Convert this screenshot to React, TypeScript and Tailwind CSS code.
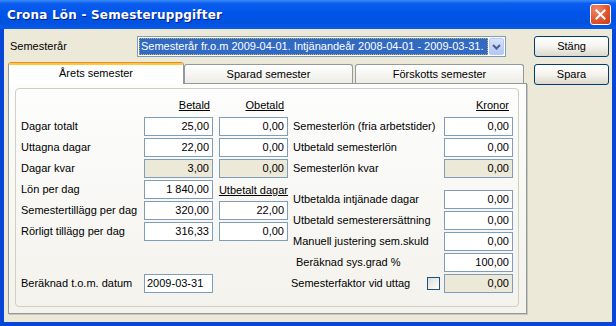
import React from 'react'

type FieldProps = {
  value: string
  ro?: boolean
  left?: boolean
}

const Field = ({ value, ro = false, left = false }: FieldProps) => (
  <div
    className={`h-[19px] w-[69px] shrink-0 border border-[#7F9DB9] flex items-center whitespace-nowrap ${
      left ? 'justify-start pl-[2px]' : 'justify-end pr-[3px]'
    } ${ro ? 'bg-[#ECE9D8]' : 'bg-white'}`}
  >
    {value}
  </div>
)

const XpButton = ({ label }: { label: string }) => (
  <div className="w-[75px] h-[21px] shrink-0 rounded-[3px] border border-[#003C74] bg-gradient-to-b from-white via-[#F4F3EE] to-[#DCD8CC] flex items-center justify-center">
    {label}
  </div>
)

const leftRows = [
  { label: 'Dagar totalt', a: '25,00', b: '0,00' },
  { label: 'Uttagna dagar', a: '22,00', b: '0,00' },
  { label: 'Dagar kvar', a: '3,00', b: '0,00', ro: true },
  { label: 'Lön per dag', a: '1 840,00', b: null },
  { label: 'Semestertillägg per dag', a: '320,00', b: '22,00' },
  { label: 'Rörligt tillägg per dag', a: '316,33', b: '0,00' }
]

const rightTop = [
  { label: 'Semesterlön (fria arbetstider)', v: '0,00' },
  { label: 'Utbetald semesterlön', v: '0,00' },
  { label: 'Semesterlön kvar', v: '0,00', ro: true }
]

const rightBottom = [
  { label: 'Utbetalda intjänade dagar', v: '0,00' },
  { label: 'Utbetald semesterersättning', v: '0,00' },
  { label: 'Manuell justering sem.skuld', v: '0,00' },
  { label: 'Beräknad sys.grad %', v: '100,00', indent: true }
]

export default function App() {
  return (
    <div className="w-[616px] h-[326px] flex flex-col bg-[#0746D6] text-[11px] text-black font-['Liberation_Sans',Arial,sans-serif] leading-none overflow-hidden">
      {/* title bar */}
      <div className="h-[29px] shrink-0 flex items-center justify-between pl-[7px] pr-[5px] bg-[linear-gradient(to_bottom,#3C8CF5_0%,#0A5CEE_12%,#0055E8_45%,#0052E0_80%,#0A5AE8_100%)]">
        <span className="text-white font-bold text-[12px] font-['DejaVu_Sans',sans-serif] tracking-[0.2px] [text-shadow:1px_1px_0_#0A1E8C]">
          Crona Lön - Semesteruppgifter
        </span>
        <div className="w-[21px] h-[21px] rounded-[3px] border border-white bg-[radial-gradient(circle_at_30%_25%,#F08A6C,#E0552E_55%,#C63A14)] flex items-center justify-center">
          <svg width="11" height="11" viewBox="0 0 11 11">
            <path d="M1.5 1.5 L9.5 9.5 M9.5 1.5 L1.5 9.5" stroke="white" strokeWidth="2" strokeLinecap="square" />
          </svg>
        </div>
      </div>

      {/* client area */}
      <div className="flex-1 mx-[4px] mb-[4px] bg-[#ECE9D8] flex flex-col">
        <div className="flex items-center h-[21px] mt-[7px]">
          <div className="w-[133px] pl-[6px]">Semesterår</div>
          <div className="w-[369px] h-[21px] border border-[#7F9DB9] bg-white flex items-center pl-[1px] pr-[1px]">
            <div className="flex-1 h-[17px] overflow-hidden bg-[#316AC5] text-white outline-1 outline-dotted outline-[#C9B34A] -outline-offset-1 flex items-center pl-[2px] whitespace-nowrap">
              Semesterår fr.o.m 2009-04-01. Intjänandeår 2008-04-01 - 2009-03-31.
            </div>
            <div className="w-[15px] h-[17px] ml-[1px] rounded-[2px] border border-[#B9CBF3] bg-gradient-to-b from-[#D7E3FD] to-[#B2C7F6] flex items-center justify-center">
              <svg width="9" height="6" viewBox="0 0 9 6">
                <path d="M1 1 L4.5 4.5 L8 1" stroke="#4D6185" strokeWidth="2" fill="none" />
              </svg>
            </div>
          </div>
          <div className="ml-[28px] -mt-[1px]">
            <XpButton label="Stäng" />
          </div>
        </div>

        <div className="flex mt-[5px]">
          <div className="ml-[4px] w-[519px] flex flex-col">
            {/* tabs */}
            <div className="flex items-end h-[22px]">
              <div className="relative z-10 w-[176px] h-[22px] bg-white border-x border-[#919B9C] rounded-t-[3px] overflow-hidden flex flex-col">
                <div className="h-[1px] bg-[#E68B2C]" />
                <div className="h-[2px] bg-[#FFC73C]" />
                <div className="flex-1 flex items-center justify-center pb-[2px]">Årets semester</div>
              </div>
              <div className="w-[169px] h-[20px] border border-b-0 border-[#919B9C] rounded-t-[3px] bg-gradient-to-b from-white to-[#ECEBE5] flex items-center justify-center">
                Sparad semester
              </div>
              <div className="ml-[2px] w-[169px] h-[20px] border border-b-0 border-[#919B9C] rounded-t-[3px] bg-gradient-to-b from-white to-[#ECEBE5] flex items-center justify-center">
                Förskotts semester
              </div>
            </div>

            {/* tab page */}
            <div className="-mt-px h-[231px] border border-[#919B9C] bg-gradient-to-b from-[#FDFDFD] to-[#F3F2EC] shadow-[1px_1px_0_#C9C7BA] pt-[4px] pl-[6px]">
              <div className="w-[504px] h-[219px] rounded-[4px] border border-[#D0D0BF] flex pl-[5px] pt-[11px]">
                {/* left column */}
                <div className="flex flex-col w-[267px]">
                  <div className="flex h-[13px] mb-[4px]">
                    <div className="w-[123px]" />
                    <div className="w-[69px] text-right pr-[3px] underline">Betald</div>
                    <div className="w-[69px] ml-[6px] text-right pr-[4px] underline">Obetald</div>
                  </div>
                  <div className="flex flex-col gap-[2px]">
                    {leftRows.map((r) => (
                      <div key={r.label} className="flex items-center h-[19px]">
                        <div className="w-[123px] whitespace-nowrap">{r.label}</div>
                        <Field value={r.a} ro={r.ro} />
                        {r.b !== null ? (
                          <div className="ml-[6px]">
                            <Field value={r.b} ro={r.ro} />
                          </div>
                        ) : (
                          <div className="ml-[6px] w-[69px] h-[19px] flex items-end justify-end pb-[3px] whitespace-nowrap underline">
                            Utbetalt dagar
                          </div>
                        )}
                      </div>
                    ))}
                  </div>
                  <div className="flex items-center h-[19px] mt-[33px]">
                    <div className="w-[123px] whitespace-nowrap">Beräknad t.o.m. datum</div>
                    <Field value="2009-03-31" left />
                  </div>
                </div>

                {/* right column */}
                <div className="flex flex-col w-[220px] ml-[5px]">
                  <div className="flex h-[13px] mb-[4px] justify-end pr-[4px]">
                    <span className="underline">Kronor</span>
                  </div>
                  <div className="flex flex-col gap-[2px]">
                    {rightTop.map((r) => (
                      <div key={r.label} className="flex items-center h-[19px]">
                        <div className="flex-1 whitespace-nowrap">{r.label}</div>
                        <Field value={r.v} ro={r.ro} />
                      </div>
                    ))}
                  </div>
                  <div className="flex flex-col gap-[2px] mt-[12px]">
                    {rightBottom.map((r) => (
                      <div key={r.label} className="flex items-center h-[19px]">
                        <div className={`flex-1 whitespace-nowrap ${r.indent ? 'pl-[3px]' : ''}`}>{r.label}</div>
                        <Field value={r.v} />
                      </div>
                    ))}
                    <div className="flex items-center h-[19px]">
                      <div className="flex-1 whitespace-nowrap -ml-[2px]">Semesterfaktor vid uttag</div>
                      <div className="w-[13px] h-[13px] mr-[4px] border border-[#1C5180] bg-gradient-to-br from-[#DCDCD7] to-white" />
                      <Field value="0,00" ro />
                    </div>
                  </div>
                </div>
              </div>
            </div>
          </div>

          <div className="ml-[7px] mt-[2px]">
            <XpButton label="Spara" />
          </div>
        </div>
      </div>
    </div>
  )
}
